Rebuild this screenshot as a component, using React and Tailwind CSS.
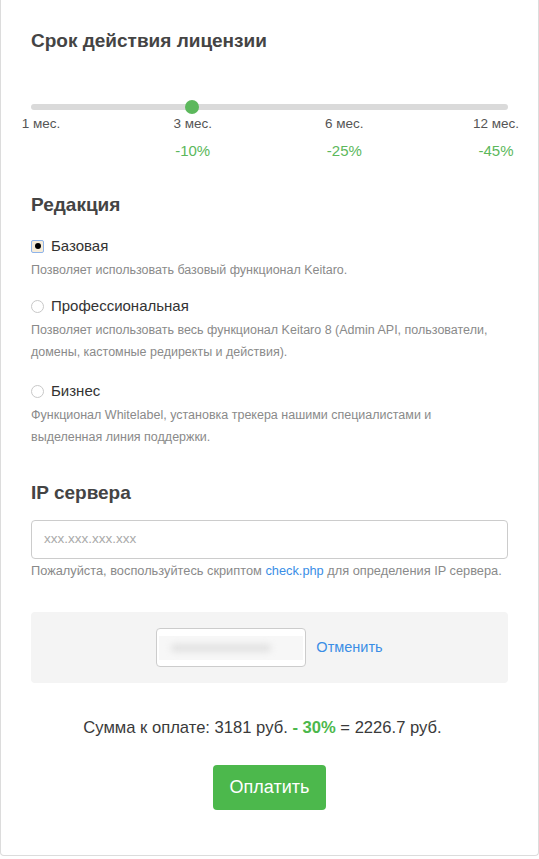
export default function App() {
  const font = { fontFamily: '"Liberation Sans", Arial, sans-serif' };
  const labels = ["1 мес.", "3 мес.", "6 мес.", "12 мес."];
  const discounts = ["", "-10%", "-25%", "-45%"];
  return (
    <div className="w-[539px] h-[859px] bg-white" style={font}>
      <div className="w-[539px] h-[856px] border border-t-0 border-[#dcdcdc] rounded-b-[4px] bg-white px-[30px] pt-[30px]">
        <h2 className="text-[19px] leading-[22px] font-bold text-[#444]">Срок действия лицензии</h2>

        <div className="relative mt-[52px] h-[6px] rounded-full bg-[#dadada]">
          <span className="absolute left-[154px] top-[-4px] w-[14px] h-[14px] rounded-full bg-[#5cb85c]"></span>
        </div>
        <div className="ml-[-20px] mr-[-18px] mt-[6px] flex justify-between text-[13.5px] leading-[16px] text-[#555]">
          {labels.map((l) => (
            <span key={l} className="w-[60px] text-center">{l}</span>
          ))}
        </div>
        <div className="ml-[-20px] mr-[-18px] mt-[10px] flex justify-between text-[15px] leading-[18px] text-[#5cb85c]">
          {discounts.map((d, i) => (
            <span key={i} className="w-[60px] text-center">{d}</span>
          ))}
        </div>

        <h2 className="mt-[34px] text-[19px] leading-[22px] font-bold text-[#444]">Редакция</h2>

        <div className="mt-[21px]">
          <label className="flex items-center gap-[7px] text-[15px] leading-[18px] text-[#333]">
            <span className="w-[13px] h-[13px] rounded-[2px] border border-[#8fb4ea] bg-[#f6ecd9] flex items-center justify-center">
              <span className="w-[6px] h-[6px] rounded-full bg-black"></span>
            </span>
            Базовая
          </label>
          <p className="mt-[4px] text-[12.5px] leading-[22px] text-[#8a8a8a]">Позволяет использовать базовый функционал Keitaro.</p>
        </div>

        <div className="mt-[16px]">
          <label className="flex items-center gap-[7px] text-[15px] leading-[18px] text-[#333]">
            <span className="w-[13px] h-[13px] rounded-full border border-[#c8c8c8] bg-white"></span>
            Профессиональная
          </label>
          <p className="mt-[4px] text-[12.5px] leading-[22px] text-[#8a8a8a]">Позволяет использовать весь функционал Keitaro 8 (Admin API, пользователи, домены, кастомные редиректы и действия).</p>
        </div>

        <div className="mt-[19px]">
          <label className="flex items-center gap-[7px] text-[15px] leading-[18px] text-[#333]">
            <span className="w-[13px] h-[13px] rounded-full border border-[#c8c8c8] bg-white"></span>
            Бизнес
          </label>
          <p className="mt-[4px] text-[12.5px] leading-[22px] text-[#8a8a8a]">Функционал Whitelabel, установка трекера нашими специалистами и<br />выделенная линия поддержки.</p>
        </div>

        <h2 className="mt-[34px] text-[19px] leading-[22px] font-bold text-[#444]">IP сервера</h2>

        <div className="mt-[16px] h-[39px] rounded-[4px] border border-[#cccccc] flex items-center px-[12px] text-[13.5px] text-[#aaa]">
          xxx.xxx.xxx.xxx
        </div>
        <p className="mt-[4px] whitespace-nowrap text-[12.8px] leading-[16px] text-[#8a8a8a]">
          Пожалуйста, воспользуйтесь скриптом <span className="text-[#3a8ee6]">check.php</span> для определения IP сервера.
        </p>

        <div className="mt-[33px] h-[71px] rounded-[4px] bg-[#f4f4f4] flex items-center justify-center gap-[10px]">
          <div className="w-[150px] h-[39px] rounded-[4px] border border-[#cccccc] bg-white flex items-center px-[2px]">
            <div className="w-full h-[24px] bg-[#f7f7f7] flex items-center px-[12px]">
              <div className="w-[100px] h-[8px] rounded-full bg-[#e2e2e2] blur-[3px]"></div>
            </div>
          </div>
          <span className="text-[14.5px] text-[#3a8ee6]">Отменить</span>
        </div>

        <p className="mt-[35px] pr-[14px] text-center text-[16.6px] leading-[20px] text-[#3a3a3a]">
          Сумма к оплате: 3181 руб. <span className="font-bold text-[#4cb84c]">- 30%</span> = 2226.7 руб.
        </p>

        <div className="mt-[27px] flex justify-center">
          <button className="w-[113px] h-[45px] rounded-[4px] bg-[#4cb84c] text-white text-[18px]">Оплатить</button>
        </div>
      </div>
    </div>
  );
}
